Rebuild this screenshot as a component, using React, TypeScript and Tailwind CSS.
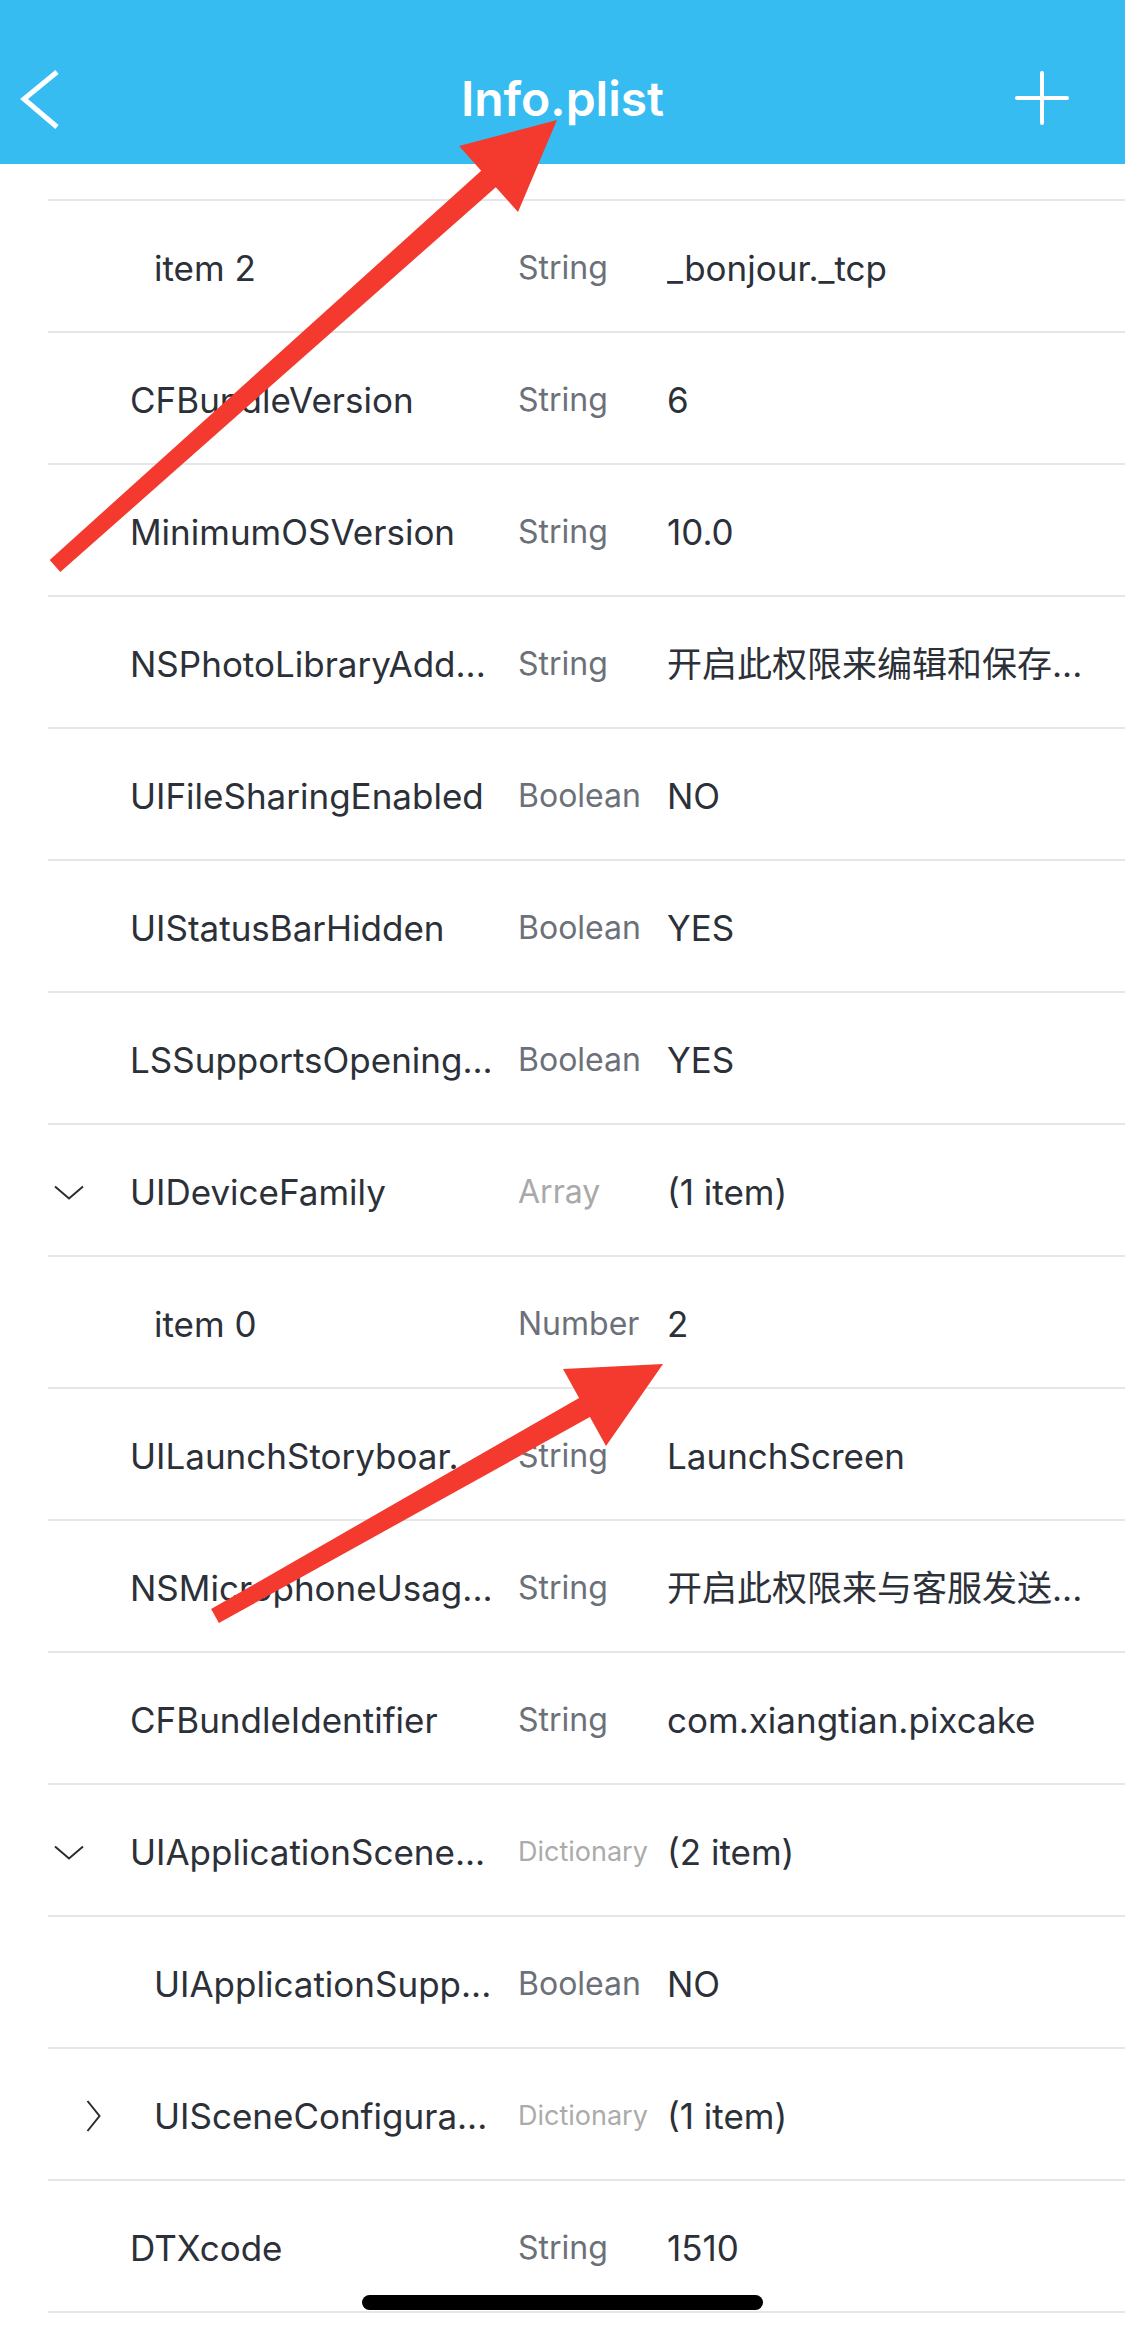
import React from "react";

type Row = {
  key: string;
  type: string;
  value: string;
  nested?: boolean;
  toggle?: "down" | "right";
};

const rows: Row[] = [
  { key: "item 2", type: "String", value: "_bonjour._tcp", nested: true },
  { key: "CFBundleVersion", type: "String", value: "6" },
  { key: "MinimumOSVersion", type: "String", value: "10.0" },
  { key: "NSPhotoLibraryAdd...", type: "String", value: "开启此权限来编辑和保存..." },
  { key: "UIFileSharingEnabled", type: "Boolean", value: "NO" },
  { key: "UIStatusBarHidden", type: "Boolean", value: "YES" },
  { key: "LSSupportsOpening...", type: "Boolean", value: "YES" },
  { key: "UIDeviceFamily", type: "Array", value: "(1 item)", toggle: "down" },
  { key: "item 0", type: "Number", value: "2", nested: true },
  { key: "UILaunchStoryboar...", type: "String", value: "LaunchScreen" },
  { key: "NSMicrophoneUsag...", type: "String", value: "开启此权限来与客服发送..." },
  { key: "CFBundleIdentifier", type: "String", value: "com.xiangtian.pixcake" },
  { key: "UIApplicationScene...", type: "Dictionary", value: "(2 item)", toggle: "down" },
  { key: "UIApplicationSupp...", type: "Boolean", value: "NO", nested: true },
  { key: "UISceneConfigura...", type: "Dictionary", value: "(1 item)", nested: true, toggle: "right" },
  { key: "DTXcode", type: "String", value: "1510" },
];

const Toggle = ({ dir }: { dir?: "down" | "right" }) => {
  if (dir === "down") {
    return (
      <svg width="30" height="15" viewBox="0 0 30 15" fill="none">
        <polyline points="1,1.5 15,13.5 29,1.5" stroke="#2a2c30" strokeWidth="2" />
      </svg>
    );
  }
  if (dir === "right") {
    return (
      <svg width="15" height="32" viewBox="0 0 15 32" fill="none">
        <polyline points="1.5,1 13.5,16 1.5,31" stroke="#2a2c30" strokeWidth="2" />
      </svg>
    );
  }
  return null;
};

const typeClass = (t: string) => {
  if (t === "Dictionary") return "text-[27px] text-[#ababab]";
  if (t === "Array") return "text-[32px] text-[#a9a9a9]";
  return "text-[32px] text-[#6c7079]";
};

const PlistRow = ({ row }: { row: Row }) => (
  <div className="ml-[48px] h-[132px] pt-[4px] flex items-center border-b-2 border-[#e6e6e8]">
    <div className="w-[470px] shrink-0 flex items-center">
      {row.nested && <div className="w-[24px] shrink-0" />}
      <div className="w-[82px] shrink-0 flex">
        <div className="w-[42px] flex justify-center items-center">
          <Toggle dir={row.toggle} />
        </div>
      </div>
      <span className="text-[35px] text-[#2c3038] whitespace-nowrap overflow-hidden">
        {row.key}
      </span>
    </div>
    <div className="w-[149px] shrink-0">
      <span className={typeClass(row.type)}>{row.type}</span>
    </div>
    <div className="flex-1 text-[35px] text-[#2c3038] whitespace-nowrap overflow-hidden">
      {row.value}
    </div>
  </div>
);

export default function App() {
  return (
    <div
      className="relative w-[1125px] h-[2336px] bg-white overflow-hidden"
      style={{ fontFamily: 'Inter, "Noto Sans CJK SC", sans-serif' }}
    >
      {/* nav bar */}
      <header className="h-[164px] bg-[#37bcf2] pt-[44px]">
        <div className="h-[108px] grid grid-cols-[1fr_auto_1fr] items-center">
          <div className="pl-[20px] flex items-center">
            <svg width="40" height="64" viewBox="0 0 40 64" fill="none">
              <polyline points="37,6 4,33 37,61" stroke="white" strokeWidth="5" />
            </svg>
          </div>
          <h1 className="text-[48px] font-semibold text-white leading-none pt-[2px]">
            Info.plist
          </h1>
          <div className="pr-[56px] flex justify-end items-center">
            <svg width="54" height="54" viewBox="0 0 54 54" fill="none">
              <line x1="2" y1="27" x2="52" y2="27" stroke="white" strokeWidth="4" strokeLinecap="round" />
              <line x1="27" y1="2" x2="27" y2="52" stroke="white" strokeWidth="4" strokeLinecap="round" />
            </svg>
          </div>
        </div>
      </header>

      {/* list, scrolled so the first row is mostly under the header */}
      <div className="ml-[48px] h-[37px] border-b-2 border-[#e6e6e8]" />
      {rows.map((row, i) => (
        <PlistRow key={i} row={row} />
      ))}

      {/* home indicator */}
      <div className="absolute left-[362px] top-[2295px] w-[401px] h-[15px] rounded-full bg-black" />

      {/* red annotation arrows */}
      <svg className="absolute inset-0 pointer-events-none" width="1125" height="2336" viewBox="0 0 1125 2336">
        <polygon
          points="49.7,560 481.2,170.8 459,146 557,120 518,212 495.8,187.2 60.3,572"
          fill="#f43a2f"
        />
        <polygon
          points="211.1,1609 579.1,1397.9 563,1369 663,1364 606,1446 589.9,1417.1 218.9,1623"
          fill="#f43a2f"
        />
      </svg>
    </div>
  );
}
